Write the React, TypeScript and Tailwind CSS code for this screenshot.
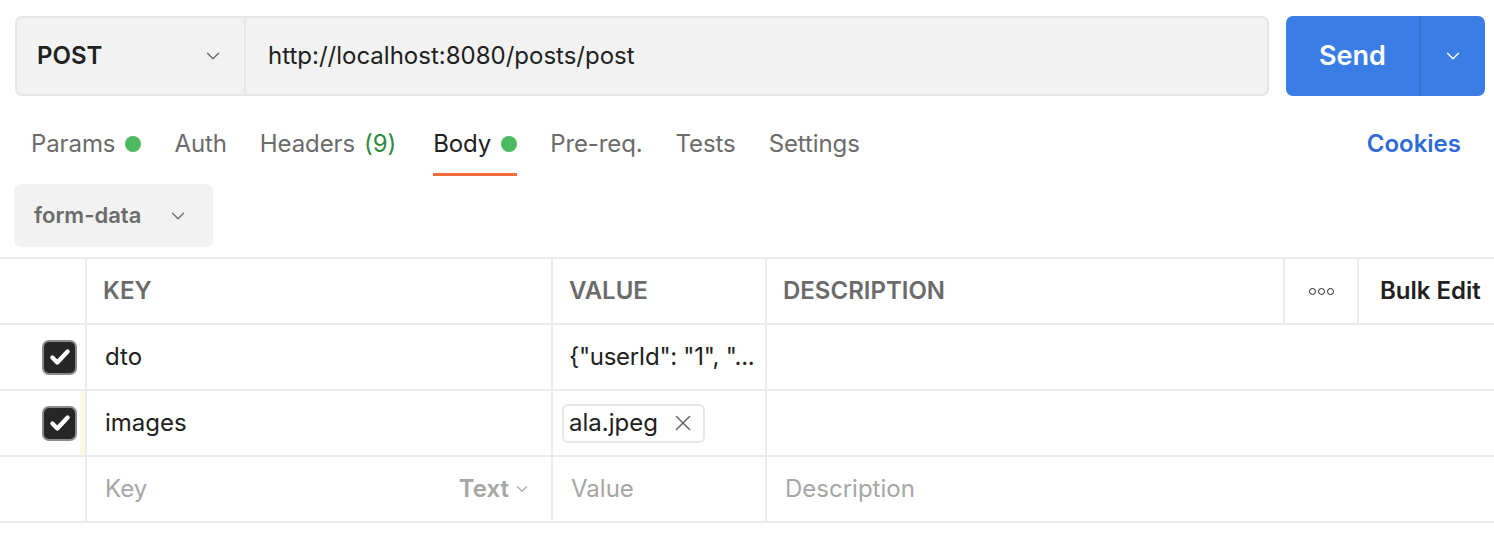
import { ChevronDown, X } from 'lucide-react'

function Chevron({ className }: { className?: string }) {
  return <ChevronDown className={className} strokeWidth={1.5} />
}

function CheckBox() {
  return (
    <span className="flex h-[35px] w-[35px] items-center justify-center rounded-[7px] border-2 border-[#8a8a8a] bg-[#262626]">
      <svg viewBox="0 0 24 24" className="h-[26px] w-[26px]" fill="none" stroke="#fff" strokeWidth={4} strokeLinecap="round" strokeLinejoin="round">
        <path d="M5 12.5l4.5 4.5L19 7" />
      </svg>
    </span>
  )
}

const tabs = [
  { label: 'Params', dot: true },
  { label: 'Auth' },
  { label: 'Headers', count: '(9)' },
  { label: 'Body', dot: true, active: true },
  { label: 'Pre-req.' },
  { label: 'Tests' },
  { label: 'Settings' },
]

export default function App() {
  return (
    <div className="h-[558px] w-[1494px] overflow-hidden bg-white font-['Inter',sans-serif] text-[#212121]">
      {/* request line */}
      <div className="flex items-stretch pl-[15px] pr-[9px] pt-[16px]">
        <div className="flex h-[80px] flex-1 overflow-hidden rounded-[7px] border-2 border-[#e6e6e6] bg-[#f2f2f2]">
          <div className="flex w-[229px] items-center justify-between border-r-2 border-[#e6e6e6] pl-[20px] pr-[20px]">
            <span className="text-[24px] font-semibold">POST</span>
            <Chevron className="h-[22px] w-[22px] text-[#6b6b6b]" />
          </div>
          <div className="flex items-center pl-[22px] text-[24px] text-[#212121]">http://localhost:8080/posts/post</div>
        </div>
        <div className="ml-[17px] flex h-[80px] w-[199px] overflow-hidden rounded-[7px] bg-[#3a7de5] text-white">
          <div className="flex w-[135px] items-center justify-center border-r-2 border-[#3470d0] text-[27px] font-semibold">Send</div>
          <div className="flex flex-1 items-center justify-center">
            <Chevron className="h-[22px] w-[22px]" />
          </div>
        </div>
      </div>

      {/* tabs */}
      <div className="flex h-[80px] items-stretch pl-[31px] pr-[33px]">
        <div className="flex flex-1 gap-[33px]">
          {tabs.map((t) => (
            <div
              key={t.label}
              className={`flex items-center border-b-[3px] pt-[18px] text-[24px] tracking-[-0.1px] ${t.active ? 'ml-[4px] border-[#f26b3a] text-[#212121]' : 'border-transparent text-[#6b6b6b]'}`}
            >
              {t.label}
              {t.count && <span className="ml-[9px] text-[#2f8a3f]">{t.count}</span>}
              {t.dot && <span className="ml-[10px] h-[16px] w-[16px] rounded-full bg-[#4cb860]" />}
            </div>
          ))}
        </div>
        <div className="flex items-center pt-[16px] text-[24px] font-semibold text-[#2f6bd6]">Cookies</div>
      </div>

      {/* body type */}
      <div className="pl-[14px] pt-[8px]">
        <div className="flex h-[63px] w-[199px] items-center justify-between rounded-[7px] bg-[#f2f2f2] pl-[20px] pr-[24px]">
          <span className="text-[22px] font-semibold text-[#6b6b6b]">form-data</span>
          <Chevron className="h-[22px] w-[22px] text-[#6b6b6b]" />
        </div>
      </div>

      {/* table */}
      <div className="mt-[10px] border-t-2 border-[#ebebeb]">
        <div className="flex h-[66px] border-b-2 border-[#ebebeb] text-[24px] font-semibold text-[#6b6b6b]">
          <div className="w-[87px] border-r-2 border-[#ebebeb]" />
          <div className="flex w-[466px] items-center border-r-2 border-[#ebebeb] pl-[16px]">KEY</div>
          <div className="flex w-[214px] items-center border-r-2 border-[#ebebeb] pl-[16px]">VALUE</div>
          <div className="flex w-[518px] items-center border-r-2 border-[#ebebeb] pl-[16px]">DESCRIPTION</div>
          <div className="flex w-[74px] items-center justify-center border-r-2 border-[#ebebeb] text-[#212121]">
            <span className="flex gap-[2px]">
              <span className="h-[7px] w-[7px] rounded-full border-[1.5px] border-[#212121]" />
              <span className="h-[7px] w-[7px] rounded-full border-[1.5px] border-[#212121]" />
              <span className="h-[7px] w-[7px] rounded-full border-[1.5px] border-[#212121]" />
            </span>
          </div>
          <div className="flex flex-1 items-center pl-[21px] font-semibold text-[#212121]">Bulk Edit</div>
        </div>

        <div className="flex h-[66px] border-b-2 border-[#ebebeb] text-[24px]">
          <div className="flex w-[87px] items-center border-r-2 border-[#ebebeb] pl-[42px]">
            <CheckBox />
          </div>
          <div className="flex w-[466px] items-center border-r-2 border-[#ebebeb] pl-[18px]">dto</div>
          <div className="flex w-[214px] items-center overflow-hidden whitespace-nowrap border-r-2 border-[#ebebeb] pl-[16px] pr-[4px] tracking-[-0.3px]">
            {'{"userId": "1", "...'}
          </div>
          <div className="flex-1" />
        </div>

        <div className="flex h-[66px] border-b-2 border-[#ebebeb] text-[24px]">
          <div className="flex w-[87px] items-center border-r-2 border-[#ebebeb] pl-[42px]">
            <CheckBox />
            <span className="ml-[3px] h-full w-[5px] bg-[#fdf8e4]" />
          </div>
          <div className="flex w-[466px] items-center border-r-2 border-[#ebebeb] pl-[18px]">images</div>
          <div className="flex w-[214px] items-center border-r-2 border-[#ebebeb] pl-[9px]">
            <span className="flex h-[39px] items-center gap-[12px] rounded-[6px] border-2 border-[#e6e6e6] pl-[5px] pr-[7px]">
              ala.jpeg
              <X className="h-[26px] w-[26px] text-[#6b6b6b]" strokeWidth={1.5} />
            </span>
          </div>
          <div className="flex-1" />
        </div>

        <div className="flex h-[66px] border-b-2 border-[#ebebeb] text-[24px] text-[#a6a6a6]">
          <div className="w-[87px] border-r-2 border-[#ebebeb]" />
          <div className="flex w-[466px] items-center justify-between border-r-2 border-[#ebebeb] pl-[18px] pr-[20px]">
            <span>Key</span>
            <span className="flex items-center gap-[4px] font-semibold">
              Text
              <Chevron className="h-[18px] w-[18px]" />
            </span>
          </div>
          <div className="flex w-[214px] items-center border-r-2 border-[#ebebeb] pl-[18px]">Value</div>
          <div className="flex flex-1 items-center pl-[18px]">Description</div>
        </div>
      </div>
    </div>
  )
}
